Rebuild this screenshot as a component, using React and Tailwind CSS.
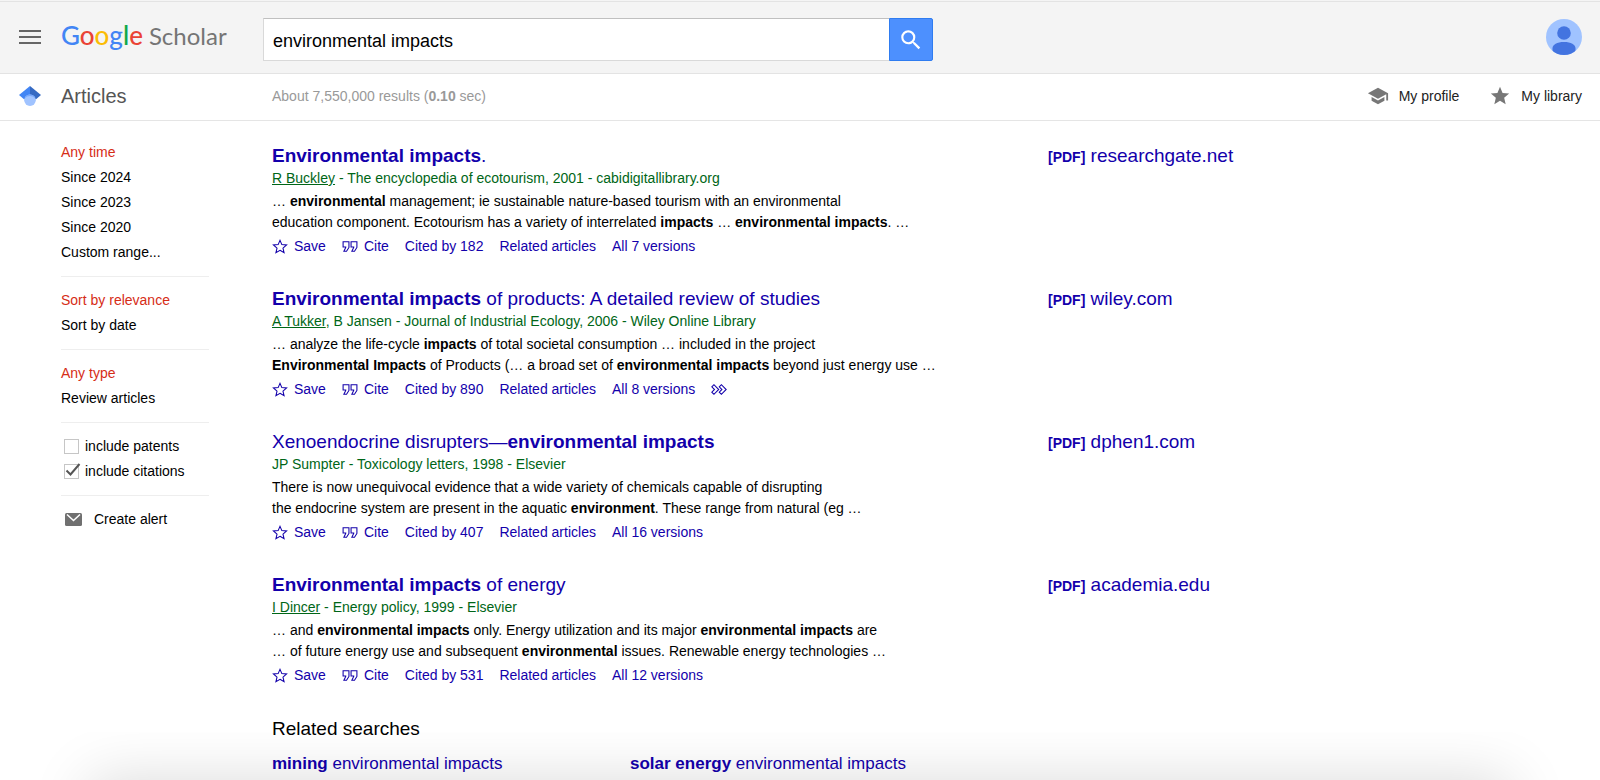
import React, { useState } from 'react';

const results = [
  {
    title: <><b>Environmental impacts</b>.</>,
    author: 'R Buckley',
    source: ' - The encyclopedia of ecotourism, 2001 - cabidigitallibrary.org',
    snippet: (
      <>
        … <b>environmental</b> management; ie sustainable nature-based tourism with an environmental<br />
        education component. Ecotourism has a variety of interrelated <b>impacts</b> … <b>environmental impacts</b>. …
      </>
    ),
    cited: 182,
    versions: 7,
    pdf: 'researchgate.net',
  },
  {
    title: <><b>Environmental impacts</b> of products: A detailed review of studies</>,
    author: 'A Tukker',
    source: ', B Jansen - Journal of Industrial Ecology, 2006 - Wiley Online Library',
    snippet: (
      <>
        … analyze the life-cycle <b>impacts</b> of total societal consumption … included in the project<br />
        <b>Environmental Impacts</b> of Products (… a broad set of <b>environmental impacts</b> beyond just energy use …
      </>
    ),
    cited: 890,
    versions: 8,
    more: true,
    pdf: 'wiley.com',
  },
  {
    title: <>Xenoendocrine disrupters—<b>environmental impacts</b></>,
    source: 'JP Sumpter - Toxicology letters, 1998 - Elsevier',
    snippet: (
      <>
        There is now unequivocal evidence that a wide variety of chemicals capable of disrupting<br />
        the endocrine system are present in the aquatic <b>environment</b>. These range from natural (eg …
      </>
    ),
    cited: 407,
    versions: 16,
    pdf: 'dphen1.com',
  },
  {
    title: <><b>Environmental impacts</b> of energy</>,
    author: 'I Dincer',
    source: ' - Energy policy, 1999 - Elsevier',
    snippet: (
      <>
        … and <b>environmental impacts</b> only. Energy utilization and its major <b>environmental impacts</b> are<br />
        … of future energy use and subsequent <b>environmental</b> issues. Renewable energy technologies …
      </>
    ),
    cited: 531,
    versions: 12,
    pdf: 'academia.edu',
  },
];

const filters = [
  ['Any time', 'Since 2024', 'Since 2023', 'Since 2020', 'Custom range...'],
  ['Sort by relevance', 'Sort by date'],
  ['Any type', 'Review articles'],
];

// small outlined icons used under each result
const LineIcon = ({ d }) => (
  <svg viewBox="0 0 15 16" className="h-[17px] w-4 shrink-0" fill="none" stroke="currentColor" strokeWidth="1">
    <path d={d} />
  </svg>
);

const STAR = 'M7.5 11.57l3.824 2.308-1.015-4.35 3.379-2.926-4.45-.378L7.5 2.122 5.761 6.224l-4.449.378 3.379 2.926-1.015 4.35z';
const QUOTE = 'M1 3.5v5h2.500v.375L1.75 12.5h2.500L6.5 8.875V3.5zM8.500 3.5v5H11v.375L9.25 12.5h2.500L14 8.875V3.5z';
const CHEVRONS = 'M.75 5.5l2-2L7.25 8l-4.5 4.5-2-2L3.25 8zM7.75 5.5l2-2L14.25 8l-4.5 4.5-2-2L10.25 8z';

const FillIcon = ({ d, className }) => (
  <svg viewBox="0 0 24 24" className={className} fill="currentColor">
    <path d={d} />
  </svg>
);

const Header = () => {
  const [query, setQuery] = useState('environmental impacts');

  return (
    <header className="bg-[#f4f4f4] pt-px">
      <div className="flex items-start border-y border-[#e3e3e3] px-[18px] pb-3 pt-4">
        <button type="button" aria-label="Options" className="flex h-[38px] w-[43px] items-center pl-px">
          <svg viewBox="0 0 22 14" className="h-[14px] w-[22px]" stroke="#666" strokeWidth="2">
            <path d="M0 1h22M0 7h22M0 13h22" />
          </svg>
        </button>
        <a href="#home" className="flex h-[38px] w-[202px] items-baseline gap-[6px] font-[Lato] text-2xl leading-[35px] text-[#757575]">
          <span className="text-[26px] font-medium">
            <span className="text-[#4285f4]">G</span>
            <span className="text-[#ea4335]">o</span>
            <span className="text-[#fbbc05]">o</span>
            <span className="text-[#4285f4]">g</span>
            <span className="text-[#0fa84a]">l</span>
            <span className="text-[#ea4335]">e</span>
          </span>
          <span>Scholar</span>
        </a>
        <form className="flex w-[670px]" onSubmit={(e) => e.preventDefault()}>
          <input
            type="text"
            aria-label="Search"
            value={query}
            onChange={(e) => setQuery(e.target.value)}
            className="h-[43px] min-w-0 flex-1 border border-r-0 border-[#d9d9d9] border-t-[#c0c0c0] bg-white px-[9px] pt-1 text-lg text-black outline-none"
          />
          <button
            type="submit"
            aria-label="Search"
            className="flex h-[43px] w-11 items-center justify-center rounded-r-xs border border-[#2f7cf0] bg-[#4d90fe] text-white"
          >
            <FillIcon
              className="h-[26px] w-[26px]"
              d="M15.5 14h-.79l-.28-.27A6.47 6.47 0 0 0 16 9.5 6.5 6.5 0 1 0 9.5 16c1.61 0 3.09-.59 4.23-1.57l.27.28v.79l5 4.99L20.49 19l-4.99-5zm-6 0C7.01 14 5 11.99 5 9.5S7.01 5 9.5 5 14 7.01 14 9.5 11.99 14 9.5 14z"
            />
          </button>
        </form>
        <button type="button" aria-label="Account" className="ml-auto flex h-[38px] items-center">
          <svg viewBox="0 0 36 36" className="h-9 w-9">
            <clipPath id="avatar"><circle cx="18" cy="18" r="18" /></clipPath>
            <g clipPath="url(#avatar)">
              <rect width="36" height="36" fill="#a0c3ff" />
              <circle cx="18" cy="14" r="6.8" fill="#4374e0" />
              <path d="M6.5 29.5c0-4 4.5-6.5 11.5-6.5s11.5 2.5 11.5 6.5V36h-23z" fill="#4374e0" />
            </g>
          </svg>
        </button>
      </div>
    </header>
  );
};

const SubHeader = () => (
  <div className="flex items-center border-b border-[#e5e5e5] px-[18px] pb-[9px] pt-[7px] text-sm leading-[30px]">
    <div className="w-[43px] pl-px">
      <svg viewBox="0 0 22 20" className="h-5 w-[22px]">
        <path d="M11 0L0 9l5 4.2h6z" fill="#4285f4" />
        <path d="M11 0v13.2h6L22 9z" fill="#356ac3" />
        <circle cx="11" cy="14.2" r="5.8" fill="#a0c3ff" />
        <path d="M5.6 12.2a5.8 5.8 0 0 1 10.8 0 8 8 0 0 0-10.8 0z" fill="#76a7fa" />
      </svg>
    </div>
    <h1 className="w-[211px] text-xl leading-[30px] text-[#555]">Articles</h1>
    <p className="text-[#999]">About 7,550,000 results (<b>0.10</b> sec)</p>
    <nav className="ml-auto flex gap-[30px] text-[#222]">
      <a href="#profile" className="flex items-center gap-[10px]">
        <FillIcon
          className="h-[22px] w-[22px] text-[#777]"
          d="M5 13.18v4L12 21l7-3.82v-4L12 17l-7-3.82zM12 3L1 9l11 6 9-4.91V17h2V9L12 3z"
        />
        My profile
      </a>
      <a href="#library" className="flex items-center gap-[10px]">
        <FillIcon
          className="h-[22px] w-[22px] text-[#777]"
          d="M12 17.27L18.18 21l-1.64-7.03L22 9.24l-7.19-.61L12 2 9.19 8.63 2 9.24l5.46 4.73L5.82 21z"
        />
        My library
      </a>
    </nav>
  </div>
);

const CheckRow = ({ label, defaultChecked }) => {
  const [checked, setChecked] = useState(defaultChecked);

  return (
    <label className="flex items-center gap-[6px] pl-[3px]">
      <span className="relative flex">
        <input
          type="checkbox"
          checked={checked}
          onChange={(e) => setChecked(e.target.checked)}
          className="h-[15px] w-[15px] appearance-none border border-[#c6c6c6] bg-white"
        />
        {checked && (
          <svg viewBox="0 0 16 14" className="pointer-events-none absolute -top-px left-px h-[14px] w-4" fill="none" stroke="#555" strokeWidth="2">
            <path d="M1.5 7.5l4 4L14.5 1" />
          </svg>
        )}
      </span>
      {label}
    </label>
  );
};

const Sidebar = () => (
  <aside className="w-[148px] shrink-0 divide-y divide-[#eee] text-sm leading-[25px]">
    {filters.map((group, i) => (
      <ul key={i} className="py-[11px]">
        {group.map((item, j) => (
          <li key={item}>
            <a href="#filter" className={j === 0 ? 'text-[#d62d17]' : 'text-black'}>{item}</a>
          </li>
        ))}
      </ul>
    ))}
    <div className="py-[11px]">
      <CheckRow label="include patents" defaultChecked={false} />
      <CheckRow label="include citations" defaultChecked={true} />
    </div>
    <div className="py-[11px]">
      <a href="#alert" className="flex items-center gap-3 pl-1">
        <svg viewBox="0 0 17 13" className="h-[13px] w-[17px]">
          <rect width="17" height="13" rx="1.5" fill="#707070" />
          <path d="M2 1.5l6.5 6 6.5-6" fill="none" stroke="#fff" strokeWidth="1.5" />
        </svg>
        Create alert
      </a>
    </div>
  </aside>
);

const Result = ({ item }) => (
  <article className="mb-[29px] grid grid-cols-[minmax(0,776px)_1fr]">
    <div>
      <h3 className="text-[19px] leading-6 text-[#1300ab]">
        <a href="#article">{item.title}</a>
      </h3>
      <p className="text-sm leading-5 text-[#006617]">
        {item.author && <a href="#author" className="underline">{item.author}</a>}
        {item.source}
      </p>
      <p className="mt-[3px] text-sm leading-[21px]">{item.snippet}</p>
      <div className="mt-px flex items-center gap-4 text-sm leading-6 text-[#1300ab]">
        <a href="#save" className="flex items-center gap-[6px]"><LineIcon d={STAR} />Save</a>
        <a href="#cite" className="flex items-center gap-[6px]"><LineIcon d={QUOTE} />Cite</a>
        <a href="#cited">Cited by {item.cited}</a>
        <a href="#related">Related articles</a>
        <a href="#versions">All {item.versions} versions</a>
        {item.more && <button type="button" aria-label="More"><LineIcon d={CHEVRONS} /></button>}
      </div>
    </div>
    <a href="#pdf" className="text-[19px] leading-6 text-[#1300ab]">
      <span className="text-sm font-bold">[PDF]</span> {item.pdf}
    </a>
  </article>
);

const App = () => (
  <div className="relative min-h-screen overflow-hidden bg-white font-['Liberation_Sans',Arial,sans-serif] text-black">
    <Header />
    <SubHeader />
    <div className="flex gap-[63px] pl-[61px] pt-2">
      <Sidebar />
      <main className="flex-1 pt-[15px]">
        {results.map((item) => (
          <Result key={item.pdf} item={item} />
        ))}
        <section>
          <h2 className="text-[19px] leading-[26px]">Related searches</h2>
          <div className="mt-[9px] grid grid-cols-[358px_1fr] text-[17px] leading-[26px] text-[#1300ab]">
            <a href="#mining"><b>mining</b> environmental impacts</a>
            <a href="#solar"><b>solar energy</b> environmental impacts</a>
          </div>
        </section>
      </main>
    </div>
    {/* soft shadow along the bottom edge */}
    <div className="pointer-events-none absolute inset-x-0 bottom-0 h-12 overflow-hidden">
      <div className="absolute inset-x-[90px] top-full h-24 shadow-[0_0_60px_rgba(0,0,0,0.15)]" />
    </div>
  </div>
);

export default App;
